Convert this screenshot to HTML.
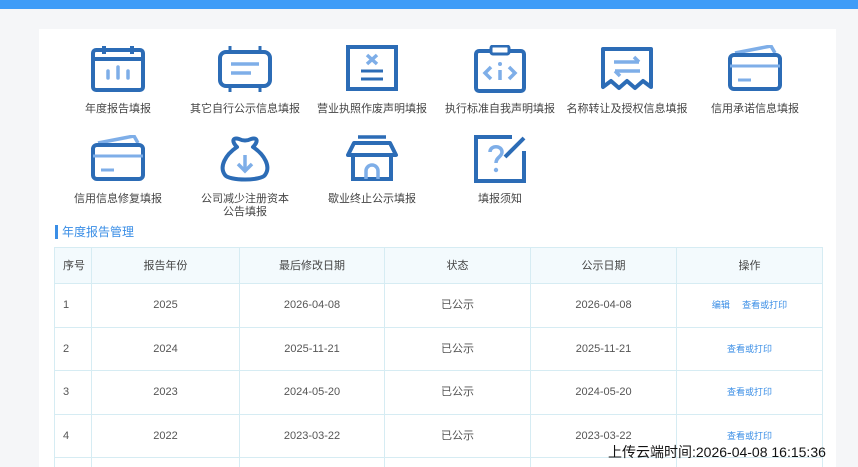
<!DOCTYPE html>
<html><head><meta charset="utf-8"><style>
*{margin:0;padding:0;box-sizing:border-box}
html,body{width:858px;height:467px;overflow:hidden}
body{background:#f5f6f8;font-family:"Liberation Sans","Noto Sans CJK SC",sans-serif}
#w{position:relative;width:858px;height:467px;overflow:hidden}
.top{position:absolute;left:0;top:0;width:858px;height:9px;background:#3f9cf7}
.panel{position:absolute;left:39px;top:29px;width:797px;height:438px;background:#fff}
.ic{position:absolute;width:128px;text-align:center;font-size:11px;color:#444;line-height:13px}
.ic svg{display:block;margin:0 auto 10px}
.title{position:absolute;left:55px;top:225px;font-size:12px;color:#3a8ee6;border-left:3px solid #3a8ee6;padding-left:4px;line-height:14px}
.tw{position:absolute;left:54px;top:247px;width:770px;height:220px;overflow:hidden}
table{border-collapse:collapse;font-size:11px;color:#555;table-layout:fixed}
td{border:1px solid #d6ecf3;text-align:center;height:43.5px;line-height:14px;vertical-align:middle;padding:0}
td span{display:inline-block;line-height:14px;vertical-align:middle}
tr.h td{background:#f3fafd;height:36px;color:#444}
td.f{text-align:left;padding-left:8px}
a{color:#3a8ee6;font-size:9px;text-decoration:none}
.up{position:absolute;left:608px;top:444px;font-size:14px;color:#111;line-height:17px}
</style></head><body><div id="w">
<div class="top"></div>
<div class="panel"></div>
<div class="ic" style="left:54px;top:45px"><svg width="56" height="48" viewBox="0 0 56 48"><rect x="3" y="5" width="50" height="40" rx="3" fill="none" stroke="#2c6cb6" stroke-width="4"/><line x1="3" y1="14" x2="53" y2="14" stroke="#2c6cb6" stroke-width="4"/><line x1="14" y1="1" x2="14" y2="9" stroke="#2c6cb6" stroke-width="4"/><line x1="42" y1="1" x2="42" y2="9" stroke="#2c6cb6" stroke-width="4"/><g stroke="#7eaee8" stroke-width="3.5" stroke-linecap="round"><line x1="18" y1="26" x2="18" y2="33"/><line x1="28" y1="22" x2="28" y2="33"/><line x1="38" y1="26" x2="38" y2="33"/></g></svg>年度报告填报</div>
<div class="ic" style="left:181px;top:45px"><svg width="56" height="48" viewBox="0 0 56 48"><rect x="3" y="7" width="50" height="34" rx="6" fill="none" stroke="#2c6cb6" stroke-width="4"/><g stroke="#2c6cb6" stroke-width="3"><line x1="13" y1="1" x2="13" y2="7"/><line x1="43" y1="1" x2="43" y2="7"/><line x1="13" y1="41" x2="13" y2="47"/><line x1="43" y1="41" x2="43" y2="47"/></g><g stroke="#7eaee8" stroke-width="3.5"><line x1="14" y1="19" x2="42" y2="19"/><line x1="14" y1="28" x2="34" y2="28"/></g></svg>其它自行公示信息填报</div>
<div class="ic" style="left:308px;top:45px"><svg width="56" height="48" viewBox="0 0 56 48"><rect x="4" y="2" width="48" height="42" fill="none" stroke="#2c6cb6" stroke-width="4"/><g stroke="#7eaee8" stroke-width="3.5"><line x1="23" y1="10" x2="33" y2="19"/><line x1="33" y1="10" x2="23" y2="19"/></g><g stroke="#2c6cb6" stroke-width="3"><line x1="17" y1="26" x2="39" y2="26"/><line x1="17" y1="34" x2="39" y2="34"/></g></svg>营业执照作废声明填报</div>
<div class="ic" style="left:436px;top:45px"><svg width="56" height="48" viewBox="0 0 56 48"><rect x="4" y="6" width="48" height="40" rx="3" fill="none" stroke="#2c6cb6" stroke-width="4"/><rect x="19" y="1" width="18" height="8" rx="2" fill="#fff" stroke="#2c6cb6" stroke-width="3"/><g stroke="#7eaee8" stroke-width="3.5" fill="none"><polyline points="19,22 13,28 19,34"/><polyline points="37,22 43,28 37,34"/><line x1="28" y1="25" x2="28" y2="35"/></g><circle cx="28" cy="19" r="2" fill="#7eaee8"/></svg>执行标准自我声明填报</div>
<div class="ic" style="left:563px;top:45px"><svg width="56" height="48" viewBox="0 0 56 48"><path d="M4 4H52V42L44 36L36 43L28 36L20 43L12 36L4 42Z" fill="none" stroke="#2c6cb6" stroke-width="4" stroke-linejoin="round"/><g stroke="#7eaee8" stroke-width="3.5" fill="none"><line x1="15" y1="17" x2="40" y2="17"/><polyline points="35,12 40,17"/><line x1="16" y1="26" x2="41" y2="26"/><polyline points="21,31 16,26"/></g></svg>名称转让及授权信息填报</div>
<div class="ic" style="left:691px;top:45px"><svg width="56" height="48" viewBox="0 0 56 48"><path d="M8 8L44 1L48 8" fill="none" stroke="#7eaee8" stroke-width="3.5"/><rect x="3" y="10" width="50" height="34" rx="4" fill="#fff" stroke="#2c6cb6" stroke-width="4"/><line x1="3" y1="21" x2="53" y2="21" stroke="#7eaee8" stroke-width="3"/><line x1="11" y1="35" x2="24" y2="35" stroke="#7eaee8" stroke-width="3"/></svg>信用承诺信息填报</div>
<div class="ic" style="left:54px;top:135px"><svg width="56" height="48" viewBox="0 0 56 48"><path d="M8 8L44 1L48 8" fill="none" stroke="#7eaee8" stroke-width="3.5"/><rect x="3" y="10" width="50" height="34" rx="4" fill="#fff" stroke="#2c6cb6" stroke-width="4"/><line x1="3" y1="21" x2="53" y2="21" stroke="#7eaee8" stroke-width="3"/><line x1="11" y1="35" x2="24" y2="35" stroke="#7eaee8" stroke-width="3"/></svg>信用信息修复填报</div>
<div class="ic" style="left:181px;top:135px"><svg width="56" height="48" viewBox="0 0 56 48"><path d="M20 12C14 6 16 2 22 4C26 6 30 6 34 4C40 2 42 6 36 12C48 20 54 32 48 40C44 46 12 46 8 40C2 32 8 20 20 12Z" fill="none" stroke="#2c6cb6" stroke-width="4" stroke-linejoin="round"/><g stroke="#7eaee8" stroke-width="3.5" fill="none"><line x1="28" y1="20" x2="28" y2="35"/><polyline points="21,29 28,36 35,29"/></g></svg>公司减少注册资本<br>公告填报</div>
<div class="ic" style="left:308px;top:135px"><svg width="56" height="48" viewBox="0 0 56 48"><line x1="14" y1="2" x2="42" y2="2" stroke="#2c6cb6" stroke-width="3.5"/><path d="M10 8H46L52 20H4Z" fill="none" stroke="#2c6cb6" stroke-width="4" stroke-linejoin="round"/><path d="M9 20V44H47V20" fill="none" stroke="#2c6cb6" stroke-width="4"/><path d="M22 44V36A6 6 0 0 1 34 36V44" fill="none" stroke="#7eaee8" stroke-width="3.5"/></svg>歇业终止公示填报</div>
<div class="ic" style="left:436px;top:135px"><svg width="56" height="48" viewBox="0 0 56 48"><path d="M40 2H4V46H52V16" fill="none" stroke="#2c6cb6" stroke-width="4"/><line x1="33" y1="22" x2="52" y2="3" stroke="#2c6cb6" stroke-width="4"/><path d="M18 17C18 10 30 10 30 17C30 22 24 22 24 28" fill="none" stroke="#7eaee8" stroke-width="3.5"/><circle cx="24" cy="35" r="2.2" fill="#7eaee8"/></svg>填报须知</div>
<div class="title">年度报告管理</div>
<div class="tw"><table>
<colgroup><col style="width:37px"><col style="width:148px"><col style="width:145px"><col style="width:146px"><col style="width:146px"><col style="width:146px"></colgroup>
<tr class="h"><td class="f"><span>序号</span></td><td><span>报告年份</span></td><td><span>最后修改日期</span></td><td><span>状态</span></td><td><span>公示日期</span></td><td><span>操作</span></td></tr>
<tr><td class="f"><span>1</span></td><td><span>2025</span></td><td><span>2026-04-08</span></td><td><span>已公示</span></td><td><span>2026-04-08</span></td><td><span><a>编辑</a>&nbsp;&nbsp;&nbsp;&nbsp;<a>查看或打印</a></span></td></tr>
<tr><td class="f"><span>2</span></td><td><span>2024</span></td><td><span>2025-11-21</span></td><td><span>已公示</span></td><td><span>2025-11-21</span></td><td><span><a>查看或打印</a></span></td></tr>
<tr><td class="f"><span>3</span></td><td><span>2023</span></td><td><span>2024-05-20</span></td><td><span>已公示</span></td><td><span>2024-05-20</span></td><td><span><a>查看或打印</a></span></td></tr>
<tr><td class="f"><span>4</span></td><td><span>2022</span></td><td><span>2023-03-22</span></td><td><span>已公示</span></td><td><span>2023-03-22</span></td><td><span><a>查看或打印</a></span></td></tr>
<tr><td class="f"></td><td></td><td></td><td></td><td></td><td></td></tr>
</table></div>
<div class="up">上传云端时间:2026-04-08 16:15:36</div>
</div></body></html>
